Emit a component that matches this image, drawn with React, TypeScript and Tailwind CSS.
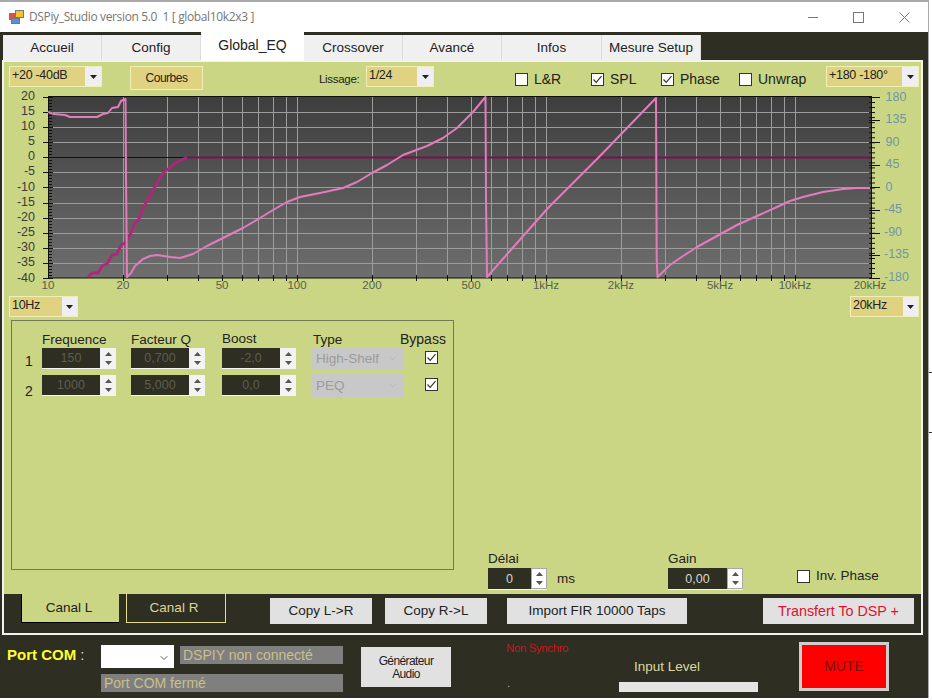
import { ChevronDown } from "lucide-react";

const TABS = ["Accueil", "Config", "Global_EQ", "Crossover", "Avancé", "Infos", "Mesure Setup"];

const DB_LABELS = [20, 15, 10, 5, 0, -5, -10, -15, -20, -25, -30, -35, -40];
const PHASE_LABELS = [180, 135, 90, 45, 0, -45, -90, -135, -180];
const FREQ_LINES = [
  20, 30, 40, 50, 60, 70, 80, 90, 100, 200, 300, 400, 500, 600, 700, 800, 900, 1000, 2000, 3000, 4000, 5000, 6000, 7000,
  8000, 9000, 10000,
];
const FREQ_LABELS: [number, string][] = [
  [10, "10"],
  [20, "20"],
  [50, "50"],
  [100, "100"],
  [200, "200"],
  [500, "500"],
  [1000, "1kHz"],
  [2000, "2kHz"],
  [5000, "5kHz"],
  [10000, "10kHz"],
  [20000, "20kHz"],
];

const freqX = (f: number) => 48 + 249 * Math.log10(f / 10);
const snapX = (f: number) => Math.round(freqX(f)) + 0.5;

const PHASE_CURVE =
  "48,112 54,114 65,115 70,117 97,117 103,114 108,113 112,108 118,107 121,101 125.5,99 126,175 127,277 131,273 135,266 143,259 150,256 157,255 170,257 180,258 193,254 207,246 223,238 243,228 260,218 273,210 287,202 300,197 320,193 343,188 357,182 372,173 387,165 403,155 427,146 443,138 457,128 473,112 485.5,97 486,198 487,277 509,252 548,208 599,157 656,98 656.7,260 657.5,277 670,265 683,256 697,247 717,236 737,225 757,216 777,207 790,201 803,197 823,192 843,189 857,188 870,188";
const SPL_CURVE =
  "88,277 92,273 98,273 103,265 107,264 112,255 117,254 121,245 125,243 130,235 135,223 139,219 143,208 153,190 163,173 177,162 187,157.5";

function Arrow({ up = false, fill = "#222" }: { up?: boolean; fill?: string }) {
  return (
    <svg width="7" height="4" viewBox="0 0 7 4">
      <path d={up ? "M3.5 0 7 4H0z" : "M0 0h7L3.5 4z"} fill={fill} />
    </svg>
  );
}

function Combo({ label, width, text = 75 }: { label: string; width: number; text?: number }) {
  return (
    <div
      className="flex h-[21px] shrink-0 border border-[#f2efb4] bg-[#eeeef4] text-[12.5px] leading-[17px] tracking-[-0.3px] text-[#222]"
      style={{ width }}
    >
      <div className="bg-[#dfd382] pl-[2px]" style={{ width: text }}>
        {label}
      </div>
      <div className="flex flex-1 items-center justify-center">
        <Arrow />
      </div>
    </div>
  );
}

function Check({ checked = false }: { checked?: boolean }) {
  return (
    <div className="flex h-[13px] w-[13px] shrink-0 items-center justify-center border border-[#333] bg-white">
      {checked && (
        <svg width="11" height="11" viewBox="0 0 11 11">
          <path d="M1.5 5.5 4.2 8.3 9.5 2.2" fill="none" stroke="#333" strokeWidth="1.2" />
        </svg>
      )}
    </div>
  );
}

function CheckLabel({ label, checked, className }: { label: string; checked?: boolean; className: string }) {
  return (
    <div className={`flex items-center gap-[6px] text-[14px] text-[#222] ${className}`}>
      <Check checked={checked} />
      <span>{label}</span>
    </div>
  );
}

function Spin({ value, dim = false, width = 74 }: { value: string; dim?: boolean; width?: number }) {
  return (
    <div
      className={`flex shrink-0 border-b border-[#f4f4f4] ${dim ? "h-[21px]" : "mt-px h-[22px]"}`}
      style={{ width }}
    >
      <div
        className={`flex flex-1 items-center justify-center bg-[#2e2e22] text-[12.5px] ${
          dim ? "text-[#5e5e50]" : "text-[#d9d9c8]"
        }`}
      >
        {value}
      </div>
      <div
        className={`flex w-[16px] flex-col items-center justify-around py-[1px] ${
          dim ? "bg-[#f3f3f3]" : "border border-[#a8a8a8] bg-white"
        }`}
      >
        <Arrow up fill="#555" />
        <Arrow fill="#555" />
      </div>
    </div>
  );
}

function TypeSelect({ value }: { value: string }) {
  return (
    <div className="flex h-[23px] w-[92px] items-center justify-between bg-[#c8c8c8] pl-[4px] pr-[6px] text-[13.5px] text-[#9b9b9b]">
      <span>{value}</span>
      <ChevronDown size={11} strokeWidth={1} color="#a8a8a8" />
    </div>
  );
}

function GrayButton({ label, className }: { label: string; className: string }) {
  return (
    <div className={`flex h-[26px] shrink-0 items-center justify-center bg-[#e1e1e1] pt-px text-[13.5px] ${className}`}>
      {label}
    </div>
  );
}

function Chart() {
  return (
    <svg
      width="917"
      height="204"
      viewBox="4 92 917 204"
      className="block overflow-visible"
      fontFamily="Liberation Sans, sans-serif"
    >
      <defs>
        <linearGradient id="plot" x1="0" y1="0" x2="0" y2="1">
          <stop offset="0" stopColor="#3e3e3e" />
          <stop offset="1" stopColor="#6e6e6e" />
        </linearGradient>
      </defs>
      <rect x="48" y="97" width="823" height="181" fill="url(#plot)" />
      {DB_LABELS.map((d, i) => {
        const y = Math.round(97 + i * 15.08) + 0.5;
        return (
          <g key={d}>
            {d !== 0 && i > 0 && i < 12 && <line x1="48" x2="871" y1={y} y2={y} stroke="#9c9c9c" />}
            <line x1="43" x2="53" y1={y} y2={y} stroke="#111" />
            {i < 12 &&
              [3, 6, 9, 12].map((o) => <line key={o} x1="48" x2="52" y1={y + o} y2={y + o} stroke="#111" />)}
            <text x="35" y={95 + i * 15.17 + 4.5} textAnchor="end" fontSize="12.5" fill="#3c3c3c">
              {d}
            </text>
          </g>
        );
      })}
      {Array.from({ length: 36 }, (_, i) => (
        <line key={i} x1="869" x2="875" y1={97.5 + i * 5.03} y2={97.5 + i * 5.03} stroke="#111" />
      ))}
      {PHASE_LABELS.map((d, i) => {
        const y = Math.round(97 + i * 22.6) + 0.5;
        return (
          <g key={d}>
            <line x1="869" x2="880" y1={y} y2={y} stroke="#111" />
            <text x={d < 0 ? 884 : 885.5} y={96 + i * 22.5 + 4.5} fontSize="12.5" fill="#6f96a3">
              {d}
            </text>
          </g>
        );
      })}
      {FREQ_LINES.map((f) => (
        <g key={f}>
          <line x1={snapX(f)} x2={snapX(f)} y1="97" y2="278" stroke="#9c9c9c" />
          <line x1={snapX(f)} x2={snapX(f)} y1="275" y2="281" stroke="#111" />
        </g>
      ))}
      {FREQ_LABELS.map(([f, label]) => (
        <text key={f} x={freqX(f)} y="289" textAnchor="middle" fontSize="11.5" fill="#55604a">
          {label}
        </text>
      ))}
      <line x1="48.5" x2="48.5" y1="96" y2="278" stroke="#111" />
      <line x1="871.5" x2="871.5" y1="96" y2="278" stroke="#111" />
      <line x1="48" x2="871" y1="96.5" y2="96.5" stroke="#111" />
      <line x1="48" x2="871" y1="278" y2="278" stroke="#111" />
      <line x1="48" x2="187" y1="157.5" y2="157.5" stroke="#111" />
      <polyline points={SPL_CURVE} fill="none" stroke="#b0267a" strokeWidth="2.8" strokeLinejoin="round" />
      <line x1="187" x2="871" y1="157.5" y2="157.5" stroke="#7a1250" strokeWidth="2" />
      <polyline points={PHASE_CURVE} fill="none" stroke="#e37cbd" strokeWidth="2" strokeLinejoin="round" />
    </svg>
  );
}

export default function App() {
  return (
    <div className="relative h-[700px] w-[932px] overflow-hidden bg-white font-['Liberation_Sans',sans-serif]">
      <div className="h-[698px] w-[929px] border-r border-t-2 border-[#a9a9a9] bg-[#2e2e22]">
        {/* title bar */}
        <div className="flex h-[30px] items-center bg-white pl-[9px]">
          <svg width="15" height="14" viewBox="0 0 15 14">
            <rect x="0.5" y="3.5" width="7" height="6" fill="#d9534a" stroke="#777" />
            <rect x="6.5" y="0.5" width="8" height="7" fill="#f2c230" stroke="#777" />
            <rect x="2.5" y="8.5" width="8" height="5" fill="#5b8ed8" stroke="#777" />
          </svg>
          <span className="ml-[5px] font-['Open_Sans',sans-serif] text-[12px] tracking-[-0.36px] text-[#777]">
            DSPiy_Studio version 5.0&nbsp;&nbsp;1 [ global10k2x3 ]
          </span>
          <div className="ml-auto flex items-center pr-[18px]">
            <svg width="10" height="10" viewBox="0 0 10 10">
              <line x1="0" x2="10" y1="5.5" y2="5.5" stroke="#777" />
            </svg>
            <svg className="ml-[35px]" width="11" height="11" viewBox="0 0 11 11">
              <rect x="0.5" y="0.5" width="10" height="10" fill="none" stroke="#777" />
            </svg>
            <svg className="ml-[35px]" width="11" height="11" viewBox="0 0 11 11">
              <path d="M0.5 0.5l10 10M10.5 0.5l-10 10" stroke="#777" />
            </svg>
          </div>
        </div>

        {/* tabs */}
        <div className="flex h-[28px] items-end pl-[3px] text-[13.5px] text-[#222]">
          {TABS.map((t) =>
            t === "Global_EQ" ? (
              <div
                key={t}
                className="relative z-10 -mb-[1px] flex h-[29px] w-[103px] items-center justify-center bg-white pb-[3px] text-[14px]"
              >
                {t}
              </div>
            ) : (
              <div
                key={t}
                className={`flex h-[25px] items-center justify-center border-r border-[#dcdcdc] bg-[#f0f0f0] pt-[2px] ${
                  t === "Infos" ? "w-[100px]" : "w-[99px]"
                }`}
              >
                {t}
              </div>
            ),
          )}
        </div>

        {/* page */}
        <div className="ml-[2px] flex h-[575px] w-[921px] flex-col border-2 border-[#f4f4ee] bg-[#cbd685]">
          {/* toolbar, inner left is x=4 */}
          <div className="flex h-[30px] items-start pl-[5px] pt-[4px]">
            <Combo label="+20 -40dB" width={93} />
            <div className="ml-[28px] flex h-[24px] w-[73px] items-center justify-center border border-[#f2efb4] bg-[#dfd382] text-[12px] tracking-[-0.5px] text-[#222]">
              Courbes
            </div>
            <span className="ml-[116px] mt-[5px] w-[47px] text-[11.5px] tracking-[-0.3px] text-[#222]">Lissage:</span>
            <Combo label="1/24" width={68} text={50} />
            <CheckLabel label="L&R" className="ml-[81px] mt-[3px] w-[76px]" />
            <CheckLabel label="SPL" checked className="mt-[3px] w-[70px]" />
            <CheckLabel label="Phase" checked className="mt-[3px] w-[78px]" />
            <CheckLabel label="Unwrap" className="mt-[3px] w-[87px]" />
            <Combo label="+180 -180°" width={93} />
          </div>

          <Chart />

          <div className="flex h-[24px] justify-between px-[5px] pr-[2px]">
            <Combo label="10Hz" width={69} text={52} />
            <Combo label="20kHz" width={69} text={52} />
          </div>

          {/* filter bank and channel settings */}
          <div className="flex h-[274px] items-start pl-[7px]">
            <div className="grid h-[250px] w-[443px] shrink-0 grid-cols-[30px_89px_91px_91px_87px_1fr] content-start border border-[#6f7a55] pt-[11px] text-[14px] leading-[16px] text-[#222]">
              <div />
              <div className="h-[15px] text-[13.5px]">Frequence</div>
              <div className="text-[13.5px]">Facteur Q</div>
              <div className="-mt-[1px] text-[13.5px]">Boost</div>
              <div className="text-[13.5px]">Type</div>
              <div className="-mt-[1px]">Bypass</div>

              <div className="mt-[5px] pl-[13px]">1</div>
              <Spin value="150" dim />
              <Spin value="0,700" dim />
              <Spin value="-2,0" dim />
              <div className="-ml-[1px] -mt-[1px]">
                <TypeSelect value="High-Shelf" />
              </div>
              <div className="mt-[3px] pl-[25px]">
                <Check checked />
              </div>

              <div className="mt-[13px] pl-[13px]">2</div>
              <div className="mt-[5px]">
                <Spin value="1000" dim />
              </div>
              <div className="mt-[5px]">
                <Spin value="5,000" dim />
              </div>
              <div className="mt-[5px]">
                <Spin value="0,0" dim />
              </div>
              <div className="-ml-[1px] mt-[4px]">
                <TypeSelect value="PEQ" />
              </div>
              <div className="mt-[8px] pl-[25px]">
                <Check checked />
              </div>
            </div>

            <div className="ml-[34px] mt-[231px] w-[180px] text-[13.5px] leading-[16px] text-[#222]">
              <div>Délai</div>
              <div className="flex items-center">
                <Spin value="0" width={59} />
                <span className="ml-[10px]">ms</span>
              </div>
            </div>
            <div className="mt-[231px] w-[129px] text-[13.5px] leading-[16px] text-[#222]">
              <div>Gain</div>
              <Spin value="0,00" width={75} />
            </div>
            <div className="mt-[246px] flex items-center gap-[6px] text-[13.5px] text-[#222]">
              <Check />
              <span>Inv. Phase</span>
            </div>
          </div>

          {/* channel bar */}
          <div className="flex h-[39px] items-start bg-[#2e2e22] pl-[17px] text-[13.5px]">
            <div className="flex h-[29px] w-[98px] items-center justify-center border-b border-l border-black bg-[#cbd685] pr-[3px] text-[#222]">
              Canal L
            </div>
            <div className="ml-[7px] flex h-[29px] w-[100px] items-center justify-center border border-t-0 border-[#e6dd8a] pr-[4px] text-[#dcd596]">
              Canal R
            </div>
            <GrayButton label="Copy L->R" className="ml-[44px] mt-[4px] w-[102px] text-[#222]" />
            <GrayButton label="Copy R->L" className="ml-[13px] mt-[4px] w-[102px] text-[#222]" />
            <GrayButton label="Import FIR 10000 Taps" className="ml-[20px] mt-[4px] w-[180px] text-[#222]" />
            <GrayButton label="Transfert To DSP +" className="ml-[76px] mt-[4px] w-[151px] !text-[14.3px] text-[#e01030]" />
          </div>
        </div>

        {/* footer */}
        <div className="flex h-[63px] items-start">
          <div className="ml-[7px] mt-[11px] w-[94px] text-[15px] font-bold leading-[18px] text-[#ffff2e]">
            Port COM <span className="font-normal text-[#ddd]">:</span>
          </div>
          <div className="w-[242px]">
            <div className="mt-[10px] flex items-start">
              <div className="flex h-[23px] w-[73px] items-center justify-end bg-white pr-[4px] pt-[2px]">
                <ChevronDown size={12} strokeWidth={1.6} color="#333" />
              </div>
              <div className="ml-[6px] mt-[1px] flex h-[18px] w-[163px] items-center bg-[#7f7f7f] pl-[3px] text-[14px] text-[#c9c08c]">
                DSPIY non connecté
              </div>
            </div>
            <div className="mt-[6px] flex h-[18px] items-center bg-[#7f7f7f] pl-[3px] text-[14px] text-[#c9c08c]">
              Port COM fermé
            </div>
          </div>
          <div className="ml-[18px] mt-[12px] flex h-[40px] w-[90px] items-center justify-center bg-[#e1e1e1] pt-[2px] text-center text-[12px] leading-[13px] tracking-[-0.6px] text-[#222]">
            Générateur
            <br />
            Audio
          </div>
          <div className="ml-[55px] flex h-[63px] w-[113px] flex-col justify-between pb-[8px] pt-[6px] text-[11.5px] leading-[14px] tracking-[-0.4px] text-[#c8161c]">
            <span>Non Synchro</span>
            <span className="pl-[1px] text-[#bbb]">.</span>
          </div>
          <div className="flex w-[139px] flex-col items-start">
            <span className="ml-[15px] mt-[24px] text-[13.5px] leading-[16px] text-[#dcd7a0]">Input Level</span>
            <div className="mt-[7px] h-[10px] w-full bg-[#e4e4e4]" />
          </div>
          <div className="ml-[41px] mt-[7px] flex h-[49px] w-[90px] items-center justify-center border-[3px] border-[#cfcfcf] bg-[#ff0000] text-[14px] text-[#7a0f10]">
            MUTE
          </div>
        </div>
      </div>
      <div className="absolute left-[929px] top-[372px] h-px w-[3px] bg-[#333]" />
      <div className="absolute left-[929px] top-[432px] h-px w-[3px] bg-[#333]" />
    </div>
  );
}
